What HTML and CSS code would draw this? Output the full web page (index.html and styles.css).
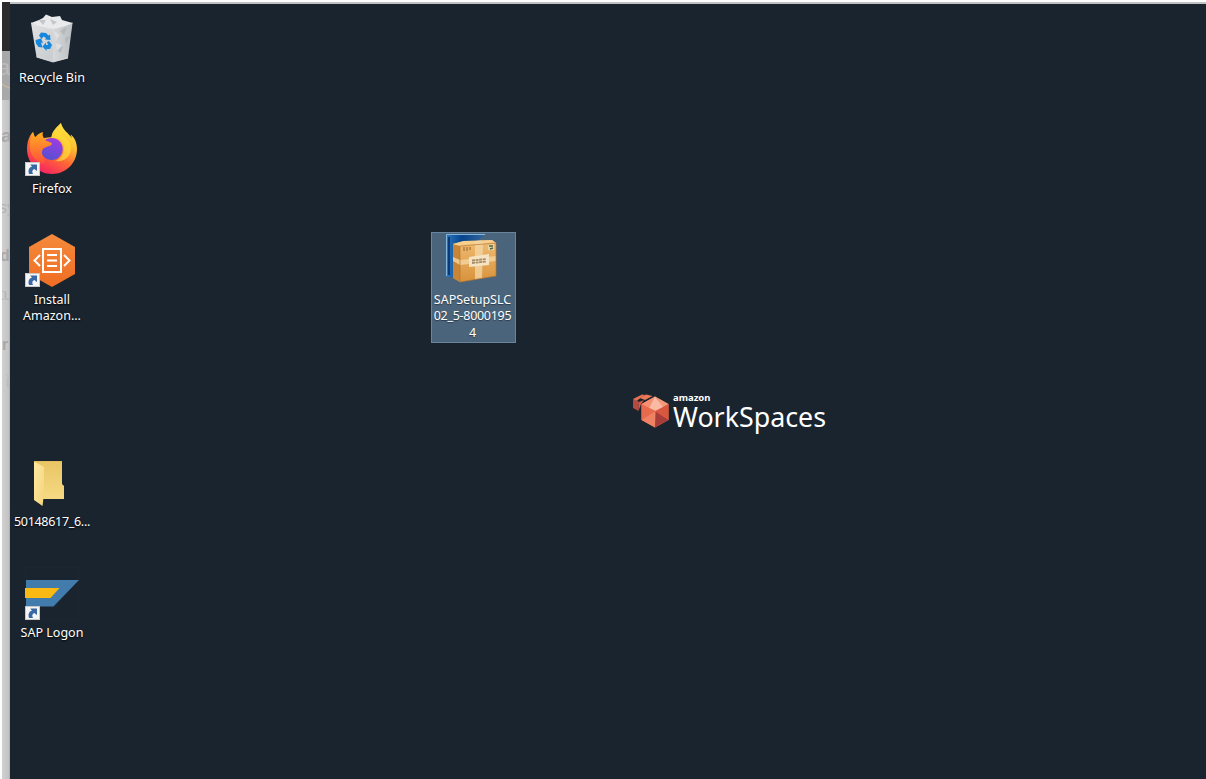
FILE: index.html
```html
<!DOCTYPE html>
<html lang="en">
<head>
<meta charset="utf-8">
<title>Amazon WorkSpaces</title>
<link rel="stylesheet" href="styles.css">
</head>
<body>
<svg class="defs" width="0" height="0">
  <defs>
    <g id="shortcut">
      <rect x=".5" y=".5" width="14" height="13" fill="#f5f5f5" stroke="#c8c8c8"/>
      <path d="M4 12C2.8 8 4 5.500 7 4.500L5.500 3 5.500 2.500H12V9L10.500 8 9.500 7C7 8 6.800 9.500 8 12Z" fill="#3a68a4"/>
    </g>
  </defs>
</svg>
<div class="screen">
  <aside class="behind">
    <div class="behind-header"></div>
    <div class="behind-banner"><span class="ghost big">av</span>
      <svg class="smile" width="8" height="8" viewBox="0 0 8 8"><path d="M0 1Q4 4 8 5" fill="none" stroke="#c7b79c" stroke-width="1.500"/></svg>
    </div>
    <span class="ghost bold g1">a</span>
    <span class="ghost g2">sy</span>
    <span class="ghost bold g3">d</span>
    <span class="ghost g4">tu</span>
    <span class="ghost bold g5">r</span>
    <span class="ghost g6">i</span>
  </aside>
  <main class="desktop">
    <div class="item recycle">
      <svg class="art" width="84" height="57" viewBox="10 12 84 57">
        <defs>
          <linearGradient id="bin" x2=".6" y2="1"><stop stop-color="#dfe1e3"/><stop offset="1" stop-color="#cccfd1"/></linearGradient>
          <linearGradient id="side" x2="1"><stop stop-color="#d6d8da"/><stop offset="1" stop-color="#bbbfc2"/></linearGradient>
        </defs>
        <path d="M31 23L53 29 53 62 36.500 57Z" fill="url(#bin)"/>
        <path d="M53 29L72.500 23 68 58 53 62Z" fill="url(#side)"/>
        <path d="M31 23L39 20 43 18 46 14.500 52 17 60 16 62 20 72.500 23 65 26 53 29 40 26Z" fill="#e9eaec"/>
        <path d="M39 20L46 20 43 25ZM50 19L53 25 57 22Z" fill="#c3c7ca"/>
        <path d="M60 31L67 27 64 35ZM65 38L70 36 66 44ZM56 50L63 46 61 53Z" fill="#a9aeb2" opacity=".6"/>
        <path d="M54 31L60 35 56 40ZM56 43L62 45 57 52Z" fill="#e4e6e7" opacity=".7"/>
        <path d="M31 23L53 29 72.500 23M36.500 57L53 62 68 58" fill="none" stroke="#eef0f1" stroke-width=".8"/>
        <g fill="#1787dc"><path d="M39 35.500L41 32.500 46 33 48.500 35.500 50 34.500 50.500 40 45 39.500 46 38 43.500 36.500 41.500 39Z"/><path d="M35.500 40L41 38.500 43 43 41 42.500 42.500 47.500 38.500 47 36 43.500Z"/><path d="M49 41L52 45 50 49 46.500 49V51L42.500 46.500 46 42.500V45H48L47 42Z"/></g>
      </svg>
      <span class="label"><b class="l">Recycle Bin</b></span>
    </div>
    <div class="item firefox">
      <svg class="art" width="84" height="57" viewBox="10 123 84 57">
        <defs>
          <linearGradient id="fx" x1=".8" y1="0" x2=".25" y2="1"><stop stop-color="#fff44a"/><stop offset=".32" stop-color="#ffbd2e"/><stop offset=".62" stop-color="#ff6536"/><stop offset="1" stop-color="#f51b68"/></linearGradient>
          <linearGradient id="orb" x1=".7" x2=".3" y2="1"><stop stop-color="#a13ae4"/><stop offset="1" stop-color="#5152d0"/></linearGradient>
          <linearGradient id="fox" x2="0" y2="1"><stop stop-color="#ffad1f"/><stop offset="1" stop-color="#ff4f3c"/></linearGradient>
        </defs>
        <path d="M61 123C57 127 52 131 51.500 137L44 138 41 137 38 138C33 137 34 134 33 132 29 136 27 142 27 149 27 163 38 174 52 174S77 163 77 149C77 142 74 137 70.500 134.500L72 138.500C69 133 63 131 61 123Z" fill="url(#fx)"/>
        <circle cx="51.700" cy="149" r="11" fill="url(#orb)"/>
        <path d="M33 132L35 137.500C37 135 39 133 43 132 42 135 43 137 45 140 48 142 52 142 52 144 50 147 46 146 43 149 41 152 42 156 45 160L44 164C31 161 26 147 33 132Z" fill="url(#fox)"/>
        <path d="M51.500 138C57 137 62 140 63 144 66 150 62 159 55 161 65 162 70 157 71 149 71 141 66 138 62 134 60 131 61 128 61 123 57 128 52 131 51.500 138Z" fill="#ffdb3b" opacity=".7"/>
        <use href="#shortcut" x="25" y="162"/>
      </svg>
      <span class="label"><b class="l">Firefox</b></span>
    </div>
    <div class="item install">
      <svg class="art" width="84" height="57" viewBox="10 234 84 57">
        <defs><linearGradient id="hex" x2="0" y2="1"><stop stop-color="#f58a3b"/><stop offset="1" stop-color="#ee6d24"/></linearGradient></defs>
        <path d="M52 234L75 247V274L52 287 29 274V247Z" fill="url(#hex)"/>
        <g fill="none" stroke="#fff" stroke-width="2"><rect x="43" y="249" width="18" height="23"/><path d="M47 255H57M47 260.500H57M47 266H57M40 255L34.500 260.500 40 266M64 255L69.500 260.500 64 266"/></g>
        <use href="#shortcut" x="25" y="273"/>
      </svg>
      <span class="label"><b class="l">Install</b><b class="l">Amazon...</b></span>
    </div>
    <div class="item folder">
      <svg class="art" width="84" height="57" viewBox="10 456 84 57">
        <defs><linearGradient id="leaf" x2="1" y2="1"><stop stop-color="#ffe9a3"/><stop offset="1" stop-color="#f3d47b"/></linearGradient>
        <linearGradient id="back" x2="0" y2="1"><stop stop-color="#e9c565"/><stop offset="1" stop-color="#f5d982"/></linearGradient></defs>
        <path d="M34 461H62V484L64 486V499H42L34 480Z" fill="url(#back)"/>
        <path d="M34 461.500L44 467V494L42.500 506 34 500Z" fill="url(#leaf)"/>
        <path d="M34 461.500H62" fill="none" stroke="#dfbb59" stroke-width=".8"/>
      </svg>
      <span class="label"><b class="l digits">50148617_6...</b></span>
    </div>
    <div class="item logon">
      <svg class="art" width="84" height="57" viewBox="10 567 84 57">
        <rect x="25.500" y="567.500" width="53" height="53" fill="none" stroke="#1d2530"/>
        <path d="M26 580H79L53.500 606.500H26Z" fill="#427cac"/>
        <path d="M25 588H59.500L50.500 598H25Z" fill="#fdb913"/>
        <use href="#shortcut" x="25" y="606"/>
      </svg>
      <span class="label"><b class="l">SAP Logon</b></span>
    </div>
    <div class="item setup">
      <svg class="art" width="84" height="57" viewBox="432 234 84 57">
        <defs>
          <linearGradient id="blue" x2="1"><stop stop-color="#2d77bd"/><stop offset=".4" stop-color="#06448e"/><stop offset="1" stop-color="#39699a"/></linearGradient>
          <linearGradient id="box" x2="0" y2="1"><stop stop-color="#f0bd74"/><stop offset="1" stop-color="#d8923b"/></linearGradient>
        </defs>
        <path d="M447 234H487L479 241 454 244V277H447Z" fill="url(#blue)"/>
        <path d="M447.500 276V234.500H486" fill="none" stroke="#82b6df"/>
        <path d="M450 237V275" stroke="#0a3975" stroke-width="2"/>
        <path d="M454 244L462 242 493 240 497 243V276L461 282 454 278Z" fill="url(#box)"/>
        <path d="M454 244L461 245V282L454 278Z" fill="#c98536"/>
        <path d="M454 244L464 241 493 240 497 243 461 246Z" fill="#f7ce8c"/>
        <path d="M476 241L483 240.500 484 243 483 278 476 279ZM454 257L461 260 497 256V261L461 265 454 261Z" fill="#f3d6a3" opacity=".8"/>
        <path d="M470 257L490 254V265L470 267Z" fill="#f5e3c3"/>
        <path d="M473 260.500L487 259M473 263L487 261.500" stroke="#a88c67" stroke-width="1.800" stroke-dasharray="3 .6"/>
        <path d="M465 247V251M468 247V251M471 247V250" stroke="#b27c3e" stroke-width="1.500"/>
        <path d="M489 245L495 244V250L489 250Z" fill="#e5d8a8"/><path d="M490 246L494 246M491 249L494 248" stroke="#536347" stroke-width="1.500"/>
        <path d="M461 246L497 243V276L461 282Z" fill="none" stroke="#b67630" stroke-width=".7"/>
      </svg>
      <span class="label"><b class="l">SAPSetupSLC</b><b class="l digits">02_5-8000195</b><b class="l">4</b></span>
    </div>
    <div class="brand">
      <svg width="37" height="38" viewBox="632 394 37 38">
        <path d="M633 400L639 403 638.500 412 633 409Z" fill="#b64a40"/>
        <path d="M633 400L642 395.500 645 396 637 401.500 639 403Z" fill="#e8704f"/>
        <path d="M639 403L644 401 641 405 638.500 412Z" fill="#d85c45"/>
        <path d="M640 399L646 395.500 652.500 397 645 401Z" fill="#ec7857"/>
        <path d="M655 397.500L668.500 405V421L655 428.500 641.500 421V405Z" fill="#ed7253"/>
        <path d="M655 397.500L661 407.500 655.500 412 649 409.500 641.500 405Z" fill="#f58f72"/>
        <path d="M655 397.500L649 409.500 655.500 412 663.500 408Z" fill="#f9b9a2"/>
        <path d="M655 397.500L668.500 405 663.500 408Z" fill="#f2987c"/>
        <path d="M668.500 405V421L655.500 412Z" fill="#d9563f"/><path d="M668.500 421L655 428.500V412Z" fill="#a83c38"/>
        <path d="M641.500 421L655.500 412 655 428.500Z" fill="#ef8264"/><path d="M641.500 405L655.500 412 641.500 421Z" fill="#e86a4d"/>
      </svg>
      <div class="brand-text"><span class="amazon">amazon</span><span class="product">WorkSpaces</span></div>
    </div>
  </main>
</div>
</body>
</html>
```
FILE: styles.css
```css
* { box-sizing: border-box; }
body { margin: 0; background: #fff; font-family: "Noto Sans", sans-serif; overflow: hidden; }
.defs { position: absolute; }
.screen { display: flex; width: 1206px; height: 779px; padding: 2px 0 0 2px; background: #fdfdfd; }
.behind { position: relative; flex: none; width: 8px; height: 777px; overflow: hidden; background: linear-gradient(90deg, #d0d0d0, #c4c4c4 80%, #aaa 100%); }
.behind-header { height: 49px; background: #2b2b2c; }
.behind-banner { position: relative; height: 49px; background: #a8a8a8; overflow: hidden; }
.ghost { position: absolute; left: -2px; color: #b3b3b3; font: 16px/18px "Liberation Sans", sans-serif; }
.bold { font-weight: 700; color: #a8a8a8; }
.big { top: 6px; left: -4px; font-size: 22px; line-height: 22px; color: #bbb; }
.smile { position: absolute; top: 32px; left: 0; }
.g1 { top: 125px; left: -1px; font-size: 19px; }
.g2 { top: 197px; left: -3px; }
.g3 { top: 245px; left: -2px; }
.g4 { top: 284px; left: -3px; }
.g5 { top: 334px; left: 0; }
.g6 { top: 371px; left: 4px; color: #bababa; }
.desktop { position: relative; flex: 1; height: 777px; border-top: 2px solid #bfc1c2; background: #1a242f; }
.item { position: absolute; left: 0; width: 84px; display: flex; flex-direction: column; align-items: center; }
.art { display: block; flex: none; }
.label { display: flex; flex-direction: column; align-items: center; padding-top: 1px; color: #fff; font-size: 12.5px; line-height: 16.3px; text-shadow: 0 1px 2px #000; }
.l { display: block; font-weight: 400; white-space: nowrap; }
.digits { letter-spacing: -.3px; }
.recycle { top: 8px; }
.firefox { top: 119px; }
.install { top: 230px; }
.folder { top: 452px; }
.logon { top: 563px; }
.setup { top: 228px; left: 421px; width: 85px; height: 111px; padding: 1px 2px 0 0; border: 1px dotted #9a8c7d; outline: 1px solid #68859d; background: #4a647b; outline-offset: -1px; }
.setup .label { text-shadow: 0 1px 1px #2b3b4a; }
.brand { position: absolute; left: 622px; top: 389px; display: flex; gap: 4px; color: #fff; }
.brand-text { display: flex; flex-direction: column; }
.amazon { font-size: 9.5px; font-weight: 700; line-height: 9px; }
.product { font-size: 28px; line-height: 28px; transform: scaleX(.957); transform-origin: left; }
```
